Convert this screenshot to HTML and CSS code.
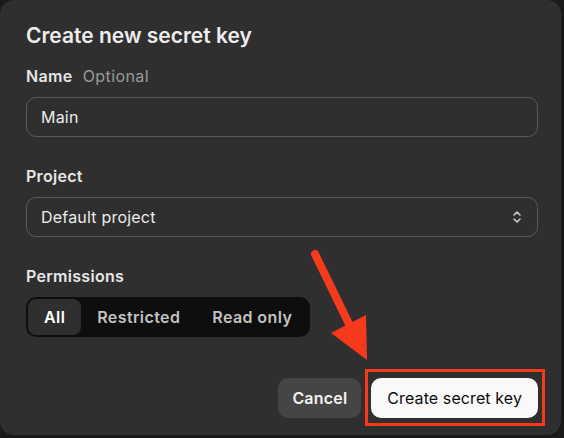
FILE: index.html
```html
<!DOCTYPE html>
<html lang="en">
<head>
<meta charset="utf-8">
<title>Create new secret key</title>
<link rel="stylesheet" href="styles.css">
</head>
<body>
<div class="dialog">
  <h1 class="title">Create new secret key</h1>

  <div class="field">
    <div class="label">Name <span class="hint">Optional</span></div>
    <div class="input">Main</div>
  </div>

  <div class="field">
    <div class="label">Project</div>
    <div class="input select">
      <span>Default project</span>
      <svg class="chev" width="16" height="16" viewBox="0 0 16 16" fill="none" stroke="#c8c8c8" stroke-width="1.6" stroke-linecap="round" stroke-linejoin="round"><path d="M5 6l3-3 3 3"/><path d="M5 10l3 3 3-3"/></svg>
    </div>
  </div>

  <div class="field">
    <div class="label">Permissions</div>
    <div class="segmented">
      <span class="seg active">All</span>
      <span class="seg">Restricted</span>
      <span class="seg">Read only</span>
    </div>
  </div>

  <div class="actions">
    <button class="btn btn-secondary">Cancel</button>
    <button class="btn btn-primary">Create secret key</button>
  </div>

  <div class="highlight"></div>
  <svg class="arrow" width="564" height="438" viewBox="0 0 564 438">
    <line x1="315" y1="254" x2="350" y2="326" stroke="#f83a1c" stroke-width="8" stroke-linecap="round"/>
    <polygon points="331,333 366,315 367,360" fill="#f83a1c"/>
  </svg>
</div>
</body>
</html>
```

FILE: styles.css
```css
* { box-sizing: border-box; }

html, body {
  margin: 0;
  padding: 0;
  background: #1a1a1a;
}

body {
  width: 564px;
  height: 438px;
  font-family: Inter, "Noto Sans", "Liberation Sans", sans-serif;
  color: #ececec;
}

.dialog {
  position: relative;
  width: 561px;
  height: 435px;
  background: #2f2f2f;
  border-radius: 14px;
  padding: 22px 23px 17px 26px;
  display: flex;
  flex-direction: column;
}

.title {
  margin: 0 0 15px;
  font-size: 21px;
  line-height: 28px;
  font-weight: 600;
  letter-spacing: 0;
  color: #ececec;
}

.field {
  display: flex;
  flex-direction: column;
  gap: 10px;
  margin-bottom: 28px;
}

.label {
  font-size: 16px;
  line-height: 22px;
  font-weight: 600;
  letter-spacing: 0.3px;
  color: #e6e6e6;
}

.hint {
  font-weight: 400;
  color: #9a9a9a;
  margin-left: 6px;
  letter-spacing: 0.4px;
}

.input {
  height: 40px;
  border: 1px solid #5a5a5a;
  border-radius: 10px;
  padding: 0 14px;
  display: flex;
  align-items: center;
  font-size: 16px;
  letter-spacing: 0.2px;
  color: #ececec;
}

.select {
  justify-content: space-between;
  padding-right: 12px;
}

.segmented {
  align-self: flex-start;
  display: flex;
  height: 40px;
  padding: 2px;
  background: #0e0e0e;
  border-radius: 10px;
}

.seg {
  display: flex;
  align-items: center;
  padding: 0 16px;
  font-size: 16px;
  font-weight: 600;
  letter-spacing: 0.4px;
  color: #c2c2c2;
  border-radius: 8px;
}

.seg.active {
  background: #2f2f2f;
  color: #ffffff;
}

.actions {
  margin-top: 13px;
  display: flex;
  justify-content: flex-end;
  gap: 10px;
}

.btn {
  height: 40px;
  border: none;
  border-radius: 10px;
  font-family: inherit;
  font-size: 16px;
  padding: 0 14px;
}

.btn-secondary {
  background: #454545;
  color: #f2f2f2;
  font-weight: 600;
  letter-spacing: 0.2px;
}

.btn-primary {
  background: #f9f9f9;
  color: #0d0d0d;
  font-weight: 400;
  letter-spacing: 0.1px;
  padding: 0 16px;
}

.highlight {
  position: absolute;
  left: 365px;
  top: 369px;
  width: 180px;
  height: 57px;
  border: 3px solid #f83a1c;
}

.arrow {
  position: absolute;
  left: 0;
  top: 0;
  pointer-events: none;
}
```
